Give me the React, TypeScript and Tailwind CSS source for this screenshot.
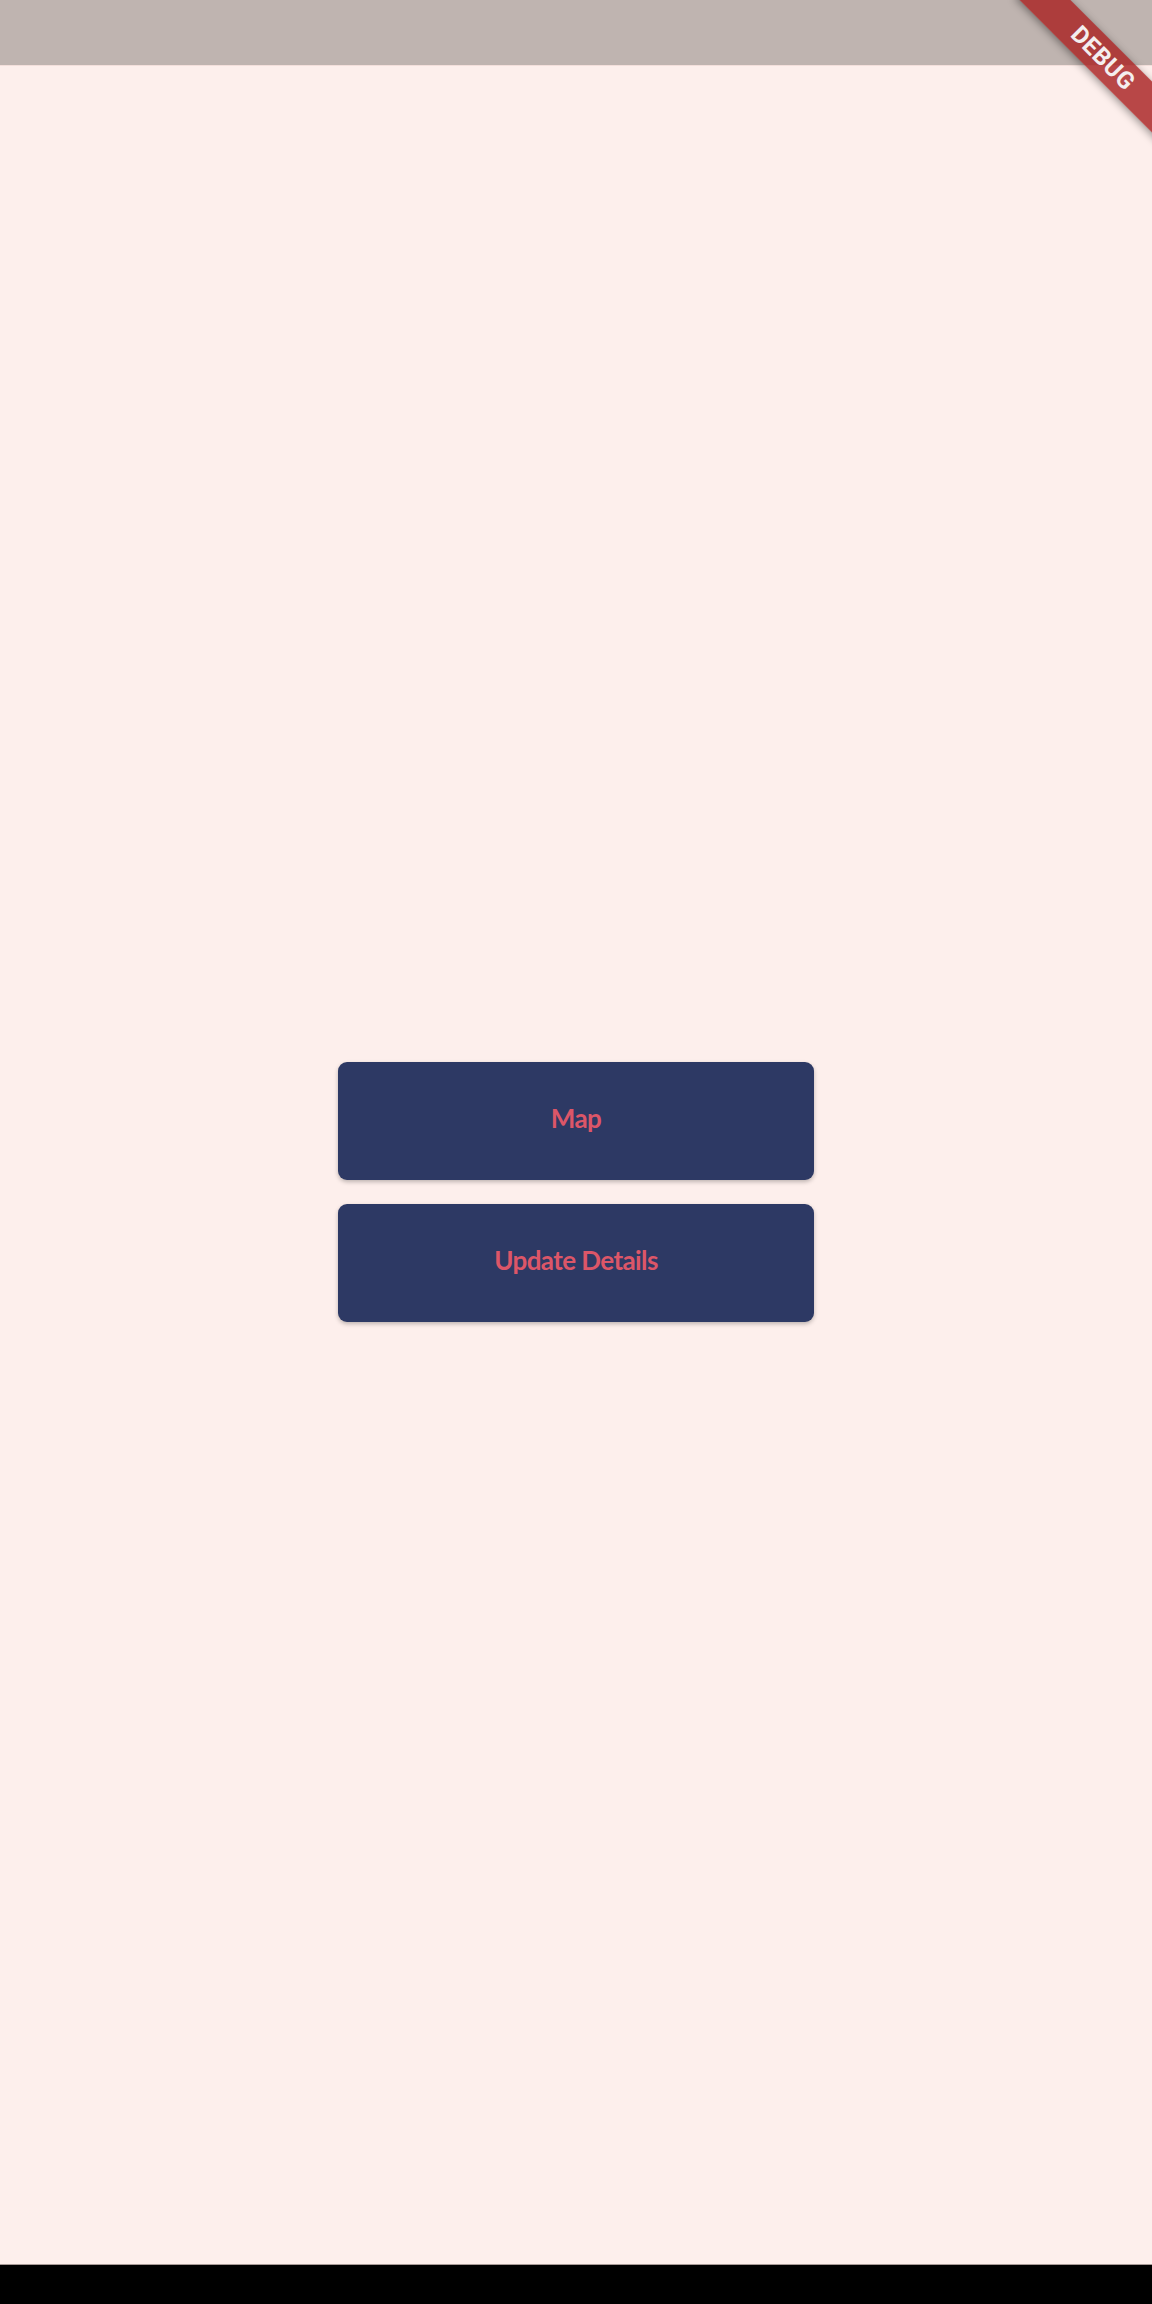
export default function App() {
  const buttons = ["Map", "Update Details"]

  return (
    <div className="relative flex h-[2304px] w-full flex-col overflow-hidden bg-[#fdefec] font-['Lato',sans-serif]">
      {/* app bar */}
      <div className="h-[66px] w-full shrink-0 border-b border-[#f3dfdb] bg-[#bfb4b0]" />

      {/* body */}
      <div className="flex flex-1 flex-col items-center justify-center gap-[24px] pt-[54px]">
        {buttons.map((label) => (
          <button
            key={label}
            className="flex h-[118px] w-[476px] items-center justify-center rounded-[9px] bg-[#2d3964] pb-[5px] text-[26px] font-bold tracking-[-0.6px] text-[#dc5668] shadow-[0_2px_4px_rgba(0,0,0,0.25)]"
          >
            {label}
          </button>
        ))}
      </div>

      {/* system nav bar */}
      <div className="h-[40px] w-full shrink-0 border-t border-[#a89a97] bg-black" />

      {/* debug banner */}
      <div className="pointer-events-none absolute left-[998px] top-[40px] flex h-[36px] w-[210px] rotate-45 items-center justify-center bg-[#a82222]/[0.82] shadow-[0_2px_8px_rgba(0,0,0,0.4)]">
        <span className="text-[24px] font-bold tracking-[0.5px] text-[#f4eeee] font-['Roboto',sans-serif]">DEBUG</span>
      </div>
    </div>
  )
}
